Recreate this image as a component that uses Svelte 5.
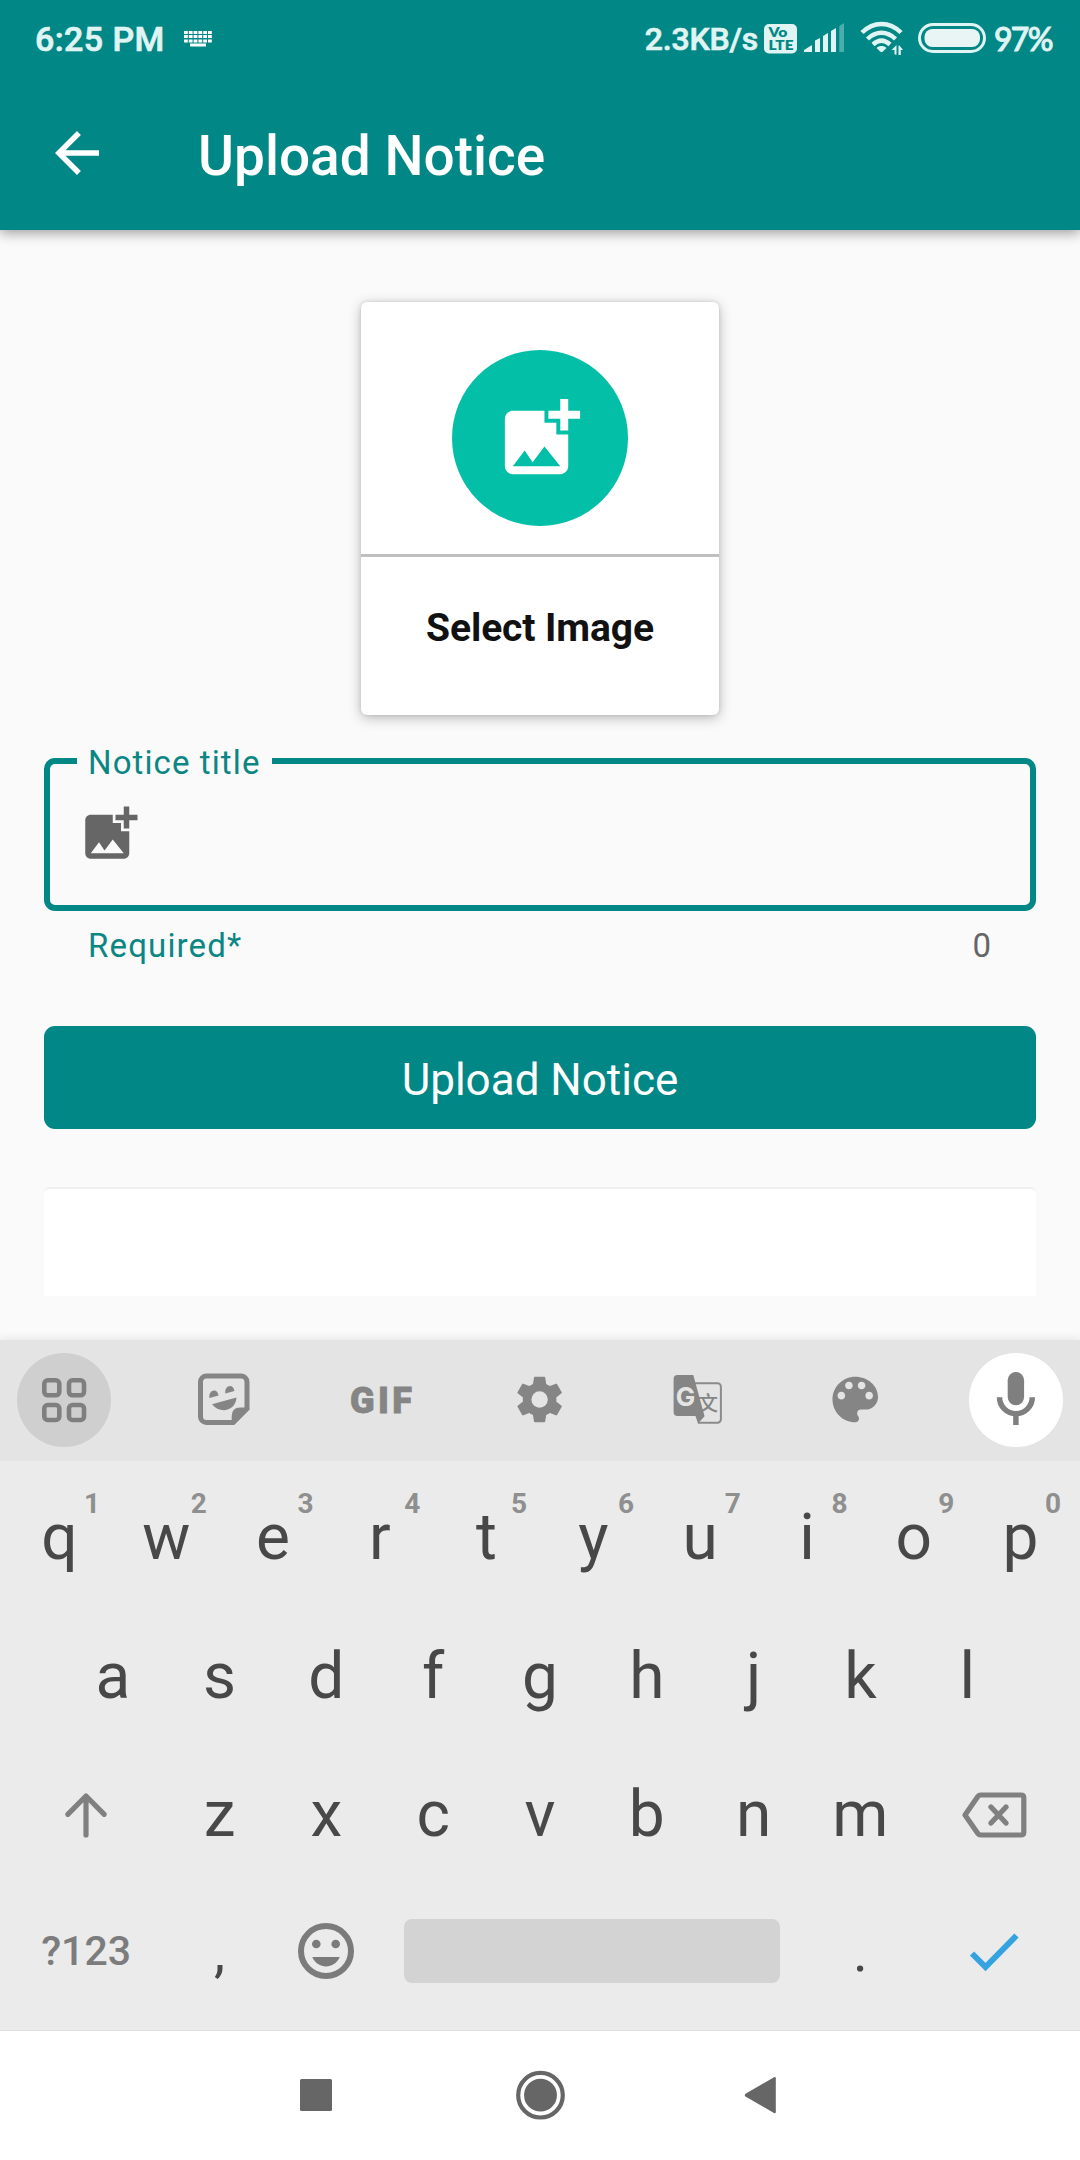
<script>
  const topRow = 'qwertyuiop'.split('').map((letter, i) => ({ letter, hint: String((i + 1) % 10) }));
  const homeRow = 'asdfghjkl'.split('');
  const bottomRow = 'zxcvbnm'.split('');
  const teeth = [0, 60, 120, 180, 240, 300];
</script>

{#snippet addImage()}
  <path d="M19 7v2.99s-1.99.01-2 0V7h-3s.01-1.99 0-2h3V2h2v3h3v2h-3zm-3 4V8h-3V5H5c-1.1 0-2 .9-2 2v12c0 1.1.9 2 2 2h12c1.1 0 2-.9 2-2v-8h-3zM5 19l3-4 2 3 3-4 4 5H5z" />
{/snippet}

<div class="screen">
  <header class="top">
    <div class="status">
      <span class="clock">6:25 PM</span>
      <svg class="kbd" width="28" height="16" viewBox="0 0 28 16">
        <path d="M0 1.5h28M0 5.500h28M0 10h28" stroke-width="2.800" stroke-dasharray="3.800 1" />
        <path d="M6 14h16" stroke-width="3" />
      </svg>
      <span class="speed">2.3KB/s</span>
      <svg class="volte" width="33" height="30" viewBox="0 0 33 30">
        <rect width="33" height="29.5" rx="5" />
        <text x="4.500" y="13" textLength="19" lengthAdjust="spacingAndGlyphs">Vo</text>
        <text x="4.500" y="26" textLength="25" lengthAdjust="spacingAndGlyphs">LTE</text>
      </svg>
      <svg class="signal" width="41" height="30" viewBox="0 0 41 30">
        <path d="M0 29v-2l8-5v7zM11 29V17.500l5-2.500V29zM19 29V13l5-3v19zM27 29V8l5-3v24z" />
        <path class="dim" d="M35.300 29V3l4.700-3v29z" />
      </svg>
      <svg class="wifi" width="44" height="36" viewBox="0 0 44 36">
        <path class="arcs" d="M2 11.500C13.500 0 29.500 0 41 11.500M7.500 18C16 9.800 27 9.800 35.500 18M13 23.500c5.500-5 11.500-5 17 0" />
        <path d="M16.500 27c3-2.600 7-2.600 10 0l-3.600 3.500q-1.400 1-2.800 0z" />
        <path d="M36.500 24v9.500h-2v-4.500h-3zM38.500 34v-9.500h1l3.500 4.500h-2.200v5z" />
      </svg>
      <svg class="battery" width="68" height="30" viewBox="0 0 68 30">
        <rect x="1.500" y="1.500" width="65" height="27" rx="13.500" />
        <rect class="fill" x="6.500" y="6" width="55.500" height="18" rx="8" />
      </svg>
      <span class="percent">97%</span>
    </div>
    <div class="appbar">
      <svg width="66" height="66" viewBox="0 0 24 24"><path d="M20 11H7.830l5.590-5.590L12 4l-8 8 8 8 1.410-1.410L7.830 13H20v-2z" /></svg>
      <h1>Upload Notice</h1>
    </div>
  </header>

  <main>
    <section class="card">
      <div class="preview">
        <div class="disc"><svg width="95" height="95" viewBox="0 0 24 24">{@render addImage()}</svg></div>
      </div>
      <div class="caption">Select Image</div>
    </section>

    <div class="field">
      <span class="label">Notice title</span>
      <svg width="66" height="66" viewBox="0 0 24 24">{@render addImage()}</svg>
    </div>
    <div class="helper"><span>Required*</span><span class="count">0</span></div>

    <button class="upload">Upload Notice</button>
    <div class="panel"></div>
  </main>

  <section class="keyboard">
    <div class="tools">
      <svg class="round grey" viewBox="0 0 94 94">
        <g fill="none" stroke="#7f7f7f" stroke-width="4.600">
          <rect x="27.300" y="27.300" width="15" height="15" rx="3.500" />
          <rect x="52" y="27.300" width="15" height="15" rx="3.500" />
          <rect x="27.300" y="52" width="15" height="15" rx="3.500" />
          <rect x="52" y="52" width="15" height="15" rx="3.500" />
        </g>
      </svg>
      <svg viewBox="0 0 94 94">
        <path d="M30.500 23h34.500a6 6 0 0 1 6 6v26.500L57 69.500H30.500a6 6 0 0 1-6-6V29a6 6 0 0 1 6-6z" fill="none" stroke="#858585" stroke-width="5" />
        <path d="M73.300 54.500v2L58 72h-2.300V63q0-8.500 8.500-8.500z" />
        <path d="M33.500 45c-1.300-8 8-10.500 9-2.500zM49.400 40.400c-1.300-8 8-10.500 9-2.500zM36 51.300L60.500 44.500C59.500 58.500 43.500 61 36 51.300z" />
      </svg>
      <svg viewBox="0 0 94 94">
        <text class="gif" x="47" y="60" text-anchor="middle" textLength="62" lengthAdjust="spacing">GIF</text>
      </svg>
      <svg viewBox="0 0 94 94">
        <g transform="translate(46.600 46.500)">
          <circle r="16.800" />
          {#each teeth as angle}
            <path transform="rotate({angle})" d="M-4.700-22.800h9.400q.8 0 .9.800L7-13H-7l1.400-9q.1-.8.900-.8z" />
          {/each}
          <circle r="8.200" fill="#e4e4e4" />
        </g>
      </svg>
      <svg viewBox="0 0 94 94">
        <path d="M41 30.300h24.500a3.400 3.400 0 0 1 3.400 3.400v32.600a3.400 3.400 0 0 1-3.400 3.400H46" fill="none" stroke="#8b8b8b" stroke-width="2" />
        <text class="han" x="56" y="58" text-anchor="middle">文</text>
        <path d="M25.600 22h15.700L52.600 63.300 46 70.500 43.500 63H25.600a4 4 0 0 1-4-4V26a4 4 0 0 1 4-4z" />
        <text class="g" x="33.500" y="52.700" text-anchor="middle">G</text>
      </svg>
      <svg viewBox="0 0 94 94">
        <path transform="translate(14.900 16.100) scale(2.530)" d="M12 3c-4.970 0-9 4.030-9 9s4.030 9 9 9c.83 0 1.500-.67 1.500-1.500 0-.39-.15-.74-.39-1.010-.23-.26-.38-.61-.38-.99 0-.83.67-1.500 1.500-1.500H16c2.760 0 5-2.240 5-5 0-4.420-4.030-8-9-8zm-5.500 9c-.83 0-1.500-.67-1.500-1.500S5.670 9 6.500 9 8 9.670 8 10.500 7.330 12 6.500 12zm3-4C8.670 8 8 7.330 8 6.500S8.670 5 9.500 5s1.500.67 1.500 1.500S10.330 8 9.500 8zm5 0c-.83 0-1.500-.67-1.500-1.500S13.670 5 14.500 5s1.500.67 1.500 1.500S15.330 8 14.500 8zm3 4c-.83 0-1.500-.67-1.500-1.500S16.670 9 17.500 9s1.500.67 1.500 1.500-.67 1.500-1.500 1.500z" />
      </svg>
      <svg class="round white" viewBox="0 0 94 94">
        <rect x="38.700" y="19" width="16.400" height="33.300" rx="8.200" />
        <path d="M30.500 44.300a16.400 16.400 0 0 0 32.800 0M46.900 60v12" fill="none" stroke="#7f7f7f" stroke-width="5.500" />
      </svg>
    </div>

    <div class="keys">
      <div class="row">
        {#each topRow as key}
          <div class="key">{key.letter}<span class="hint">{key.hint}</span></div>
        {/each}
      </div>
      <div class="row home">
        {#each homeRow as letter}<div class="key">{letter}</div>{/each}
      </div>
      <div class="row">
        <div class="key wide">
          <svg width="50" height="50" viewBox="0 0 50 50"><path class="line" d="M25 45V6M6.800 24.300L25 6l18.200 18.300" /></svg>
        </div>
        {#each bottomRow as letter}<div class="key">{letter}</div>{/each}
        <div class="key wide">
          <svg width="68" height="50" viewBox="0 0 68 50"><path class="line" d="M20.500 5H61q2.800 0 2.800 2.800v34.400q0 2.800-2.800 2.800H20.500q-1.500 0-2.500-1.300L5 25 18 6.300Q19 5 20.500 5zM31 17l15 16M46 17l-15 16" /></svg>
        </div>
      </div>
      <div class="row last">
        <div class="key wide sym">?123</div>
        <div class="key mark">,</div>
        <div class="key">
          <svg width="60" height="60" viewBox="0 0 60 60">
            <circle cx="30" cy="30" r="25" fill="none" stroke="#7b7b7b" stroke-width="6" />
            <circle cx="20.300" cy="23" r="4.300" /><circle cx="39.700" cy="23" r="4.300" />
            <path d="M16.300 36h27.400c-5 12.500-22.400 12.500-27.400 0z" />
          </svg>
        </div>
        <div class="space"><div class="bar"></div></div>
        <div class="key mark">.</div>
        <div class="key wide">
          <svg width="54" height="44" viewBox="0 0 54 44"><path class="check" d="M5 24.500L18.500 38 49.500 6.500" /></svg>
        </div>
      </div>
    </div>
  </section>

  <nav>
    <svg width="50" height="50" viewBox="0 0 50 50"><rect x="9" y="9" width="32" height="32" rx="1.500" /></svg>
    <svg width="54" height="50" viewBox="0 0 54 50">
      <circle cx="28.500" cy="25.200" r="22.300" fill="none" stroke="#666" stroke-width="4.200" /><circle cx="28.500" cy="25.200" r="16.400" />
    </svg>
    <svg width="50" height="50" viewBox="0 0 50 50"><path d="M9.500 23.800L38 7.200q1.800-.8 1.800 1V42q0 1.800-1.800 1L9.500 26.500q-1.500-1.200 0-2.700z" /></svg>
  </nav>
</div>

<style>
  :global(body) { background: #fafafa; }
  .screen {
    width: 1080px;
    height: 2160px;
    display: flex;
    flex-direction: column;
    overflow: hidden;
    background: #fafafa;
    font-family: Roboto, "Noto Sans CJK SC", sans-serif;
  }
  svg { display: block; flex: none; }

  .top {
    height: 230px;
    flex: none;
    background: #008786;
    box-shadow: 0 3px 12px rgba(0, 0, 0, 0.38);
    color: #fff;
  }
  .status {
    height: 78px;
    display: flex;
    align-items: center;
    padding: 0 27px 0 35px;
    color: #e0f4f3;
    fill: #e0f4f3;
  }
  .clock {
    width: 149px;
    font-size: 34px;
    font-weight: 500;
    letter-spacing: 0.400px;
    white-space: nowrap;
    -webkit-text-stroke: 0.700px #e0f4f3;
  }
  .kbd { stroke: #fff; }
  .speed { margin-left: auto; font-size: 32px; font-weight: 500; letter-spacing: -0.200px; -webkit-text-stroke: 0.700px #e0f4f3; }
  .volte { margin-left: 6px; }
  .volte text { fill: #008786; font-size: 12.500px; font-weight: 800; font-family: Lato, sans-serif; }
  .signal { margin-left: 7px; margin-top: -2px; }
  .signal .dim { opacity: 0.35; }
  .wifi { margin-left: 15px; }
  .arcs { fill: none; stroke: #e0f4f3; stroke-width: 4.500px; }
  .battery { margin-left: 14px; margin-top: -2px; }
  .battery rect { fill: none; stroke: #e0f4f3; stroke-width: 3px; }
  .battery .fill { fill: #e8f5f4; stroke: none; }
  .percent {
    margin: -2px 0 0 8px;
    width: 59px;
    font: 500 32px Lato, sans-serif;
    letter-spacing: -1.700px;
    white-space: nowrap;
    -webkit-text-stroke: 0.900px #e0f4f3;
  }
  .appbar {
    height: 152px;
    display: flex;
    align-items: center;
    padding-left: 44px;
    fill: #fff;
  }
  .appbar svg { margin-top: -2px; }
  h1 { margin: 4px 0 0 88px; font-size: 55px; font-weight: 500; line-height: 66px; }

  main {
    height: 1110px;
    flex: none;
    display: flex;
    flex-direction: column;
    padding: 72px 44px 0;
    box-sizing: border-box;
  }
  .card {
    width: 358px;
    height: 413px;
    flex: none;
    align-self: center;
    border-radius: 6px;
    background: #fff;
    box-shadow: 0 3px 13px rgba(0, 0, 0, 0.26), 0 0 4px rgba(0, 0, 0, 0.12);
  }
  .preview {
    display: flex;
    justify-content: center;
    padding-top: 48px;
    box-sizing: border-box;
    height: 255px;
    border-bottom: 3px solid #bfbfbf;
  }
  .disc {
    width: 176px;
    height: 176px;
    border-radius: 50%;
    background: #03bfa7;
    fill: #fff;
    display: flex;
    align-items: center;
    justify-content: center;
  }
  .caption {
    padding-top: 48px;
    text-align: center;
    font-size: 39px;
    line-height: 47px;
    font-weight: 700;
    letter-spacing: -0.100px;
    color: #111;
  }
  .field {
    position: relative;
    margin-top: 43px;
    height: 153px;
    flex: none;
    box-sizing: border-box;
    border: 6px solid #008786;
    border-radius: 11px;
    padding: 37px 0 0 27px;
    fill: #666;
  }
  .label {
    position: absolute;
    left: 27px;
    top: -21px;
    padding: 0 12px 0 11px;
    background: #fafafa;
    color: #0a8683;
    font-size: 33px;
    line-height: 39px;
    letter-spacing: 1.100px;
  }
  .helper {
    display: flex;
    justify-content: space-between;
    margin-top: 15px;
    padding: 0 45px 0 44px;
    font-size: 33px;
    line-height: 39px;
    letter-spacing: 1.150px;
    color: #0a8683;
  }
  .helper .count { color: #666; letter-spacing: 0; }
  .upload {
    margin-top: 61px;
    height: 103px;
    flex: none;
    border: 0;
    border-radius: 11px;
    background: #008786;
    color: #fff;
    font-family: inherit;
    font-size: 44px;
    padding: 5px 0 0;
  }
  .panel {
    margin-top: 58px;
    height: 109px;
    box-sizing: border-box;
    flex: none;
    border-top: 2px solid #efefef;
    border-radius: 6px 6px 0 0;
    background: #fff;
  }

  .keyboard {
    height: 691px;
    flex: none;
    box-sizing: border-box;
    background: #ebebeb;
    border-bottom: 1px solid #dfdfdf;
    box-shadow: 0 -2px 8px rgba(0, 0, 0, 0.08);
  }
  .tools {
    height: 121px;
    box-sizing: border-box;
    display: flex;
    justify-content: space-between;
    padding: 13px 17px 0;
    background: #e4e4e4;
  }
  .tools svg { width: 94px; height: 94px; fill: #858585; }
  .tools .round { border-radius: 50%; }
  .tools .grey { background: #cfcfcf; }
  .tools .white { background: #fff; fill: #7f7f7f; }
  .gif { font-size: 36px; font-weight: 900; stroke: #858585; stroke-width: 0.800px; }
  .han { font: 500 20px "Noto Sans CJK SC", sans-serif; }
  .g { fill: #e4e4e4; font: 700 26px Inter, sans-serif; }

  .keys { padding: 8px 6px 0; }
  .row { height: 138.500px; display: flex; }
  .home { padding: 0 53.400px; }
  .last { margin-top: -3px; }
  .key {
    position: relative;
    flex: 1 1 0;
    display: flex;
    align-items: center;
    justify-content: center;
    font-size: 64px;
    line-height: 76px;
    color: #484848;
    fill: #7b7b7b;
  }
  .wide { flex: 0 0 160.200px; }
  .hint {
    position: absolute;
    left: calc(50% + 24.500px);
    top: 18px;
    font-size: 28px;
    line-height: 34px;
    font-weight: 700;
    color: #8f8f8f;
  }
  .line { fill: none; stroke: #808080; stroke-width: 5.200px; stroke-linecap: round; stroke-linejoin: round; }
  .sym { font-size: 41px; font-weight: 500; color: #7c7c7c; }
  .mark { font-size: 56px; padding-top: 2px; }
  .space { flex: 0 0 427.200px; display: flex; align-items: center; justify-content: center; }
  .bar { width: 376px; height: 64px; margin-right: 2px; border-radius: 8px; background: #d3d3d3; }
  .check { fill: none; stroke: #36a3e1; stroke-width: 6px; }

  nav {
    height: 129px;
    flex: none;
    display: flex;
    align-items: center;
    justify-content: space-between;
    box-sizing: border-box;
    padding: 0 294px 1px 291px;
    background: #fff;
    fill: #666;
  }
</style>
